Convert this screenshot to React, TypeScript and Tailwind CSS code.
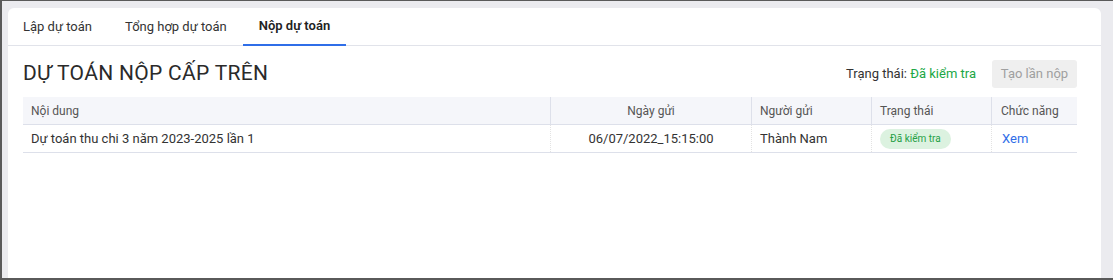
import React from "react";

export default function App() {
  const font = { fontFamily: "Roboto, 'Noto Sans', sans-serif" };
  return (
    <div
      className="w-[1113px] h-[280px] bg-[#ebebef] border-l-2 border-b-2 border-t border-[#5a5a5a] pl-[6px] pt-[7px] pr-[12px] overflow-hidden text-[#333]"
      style={font}
    >
      <div className="bg-white rounded-t-[6px] h-full">
        <div className="flex border-b border-[#e1e3ea] h-[38px] items-stretch whitespace-nowrap">
          <div className="pl-[15px] pr-[16px] flex items-center text-[13px] text-[#333]">Lập dự toán</div>
          <div className="px-[16px] flex items-center text-[13px] text-[#333] ml-[1px]">Tổng hợp dự toán</div>
          <div className="px-[16px] flex items-center text-[13px] font-semibold text-[#222] border-b-[2px] border-[#2f6ee8] -mb-px">
            Nộp dự toán
          </div>
        </div>
        <div className="pl-[15px] pt-[14px] w-[1069px]">
          <div className="flex items-center justify-between h-[28px]">
            <div className="text-[21px] text-[#2a2a2a] tracking-[0.3px]">DỰ TOÁN NỘP CẤP TRÊN</div>
            <div className="flex items-center gap-[16px]">
              <div className="text-[13px] text-[#333]">
                Trạng thái: <span className="text-[#20a745]">Đã kiểm tra</span>
              </div>
              <div className="bg-[#efefef] text-[#a0a0a0] text-[13px] rounded-[3px] h-[28px] w-[85px] flex items-center justify-center">
                Tạo lần nộp
              </div>
            </div>
          </div>
          <div className="mt-[9px] w-[1054px]">
            <div className="grid grid-cols-[528px_201px_120px_120px_85px] bg-[#f5f6fa] border-b border-[#dde0ea] h-[28px] text-[12px] text-[#555]">
              <div className="flex items-center px-[8px] border-r border-[#dde0ea]">Nội dung</div>
              <div className="flex items-center justify-center border-r border-[#dde0ea]">Ngày gửi</div>
              <div className="flex items-center px-[8px] border-r border-[#dde0ea]">Người gửi</div>
              <div className="flex items-center px-[8px] border-r border-[#dde0ea]">Trạng thái</div>
              <div className="flex items-center px-[9px]">Chức năng</div>
            </div>
            <div className="grid grid-cols-[528px_201px_120px_120px_85px] border-b border-[#dde0ea] h-[28px] text-[13px] text-[#333]">
              <div className="flex items-center px-[8px] border-r border-dotted border-[#e3e3e3]">Dự toán thu chi 3 năm 2023-2025 lần 1</div>
              <div className="flex items-center justify-center border-r border-dotted border-[#e3e3e3]">06/07/2022_15:15:00</div>
              <div className="flex items-center px-[8px] border-r border-dotted border-[#e3e3e3]">Thành Nam</div>
              <div className="flex items-center px-[8px] border-r border-dotted border-[#e3e3e3]">
                <span className="bg-[#dcf2e0] text-[#26a046] text-[10px] rounded-full px-[10px] h-[20px] flex items-center">Đã kiểm tra</span>
              </div>
              <div className="flex items-center px-[10px] text-[#2f6ee8]">Xem</div>
            </div>
          </div>
        </div>
      </div>
    </div>
  );
}
